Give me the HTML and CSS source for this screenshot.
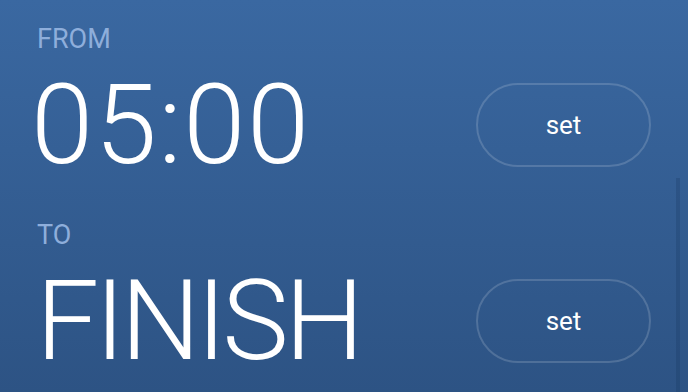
FILE: index.html
```html
<!DOCTYPE html>
<html lang="en">
<head>
    <meta charset="UTF-8">
    <meta name="viewport" content="width=device-width, initial-scale=1.0">
    <title>Timer range</title>
    <link rel="stylesheet" href="styles.css">
</head>
<body>
    <div class="range">
        <div class="field">
            <div class="label">FROM</div>
            <div class="line">
                <div class="value">05:00</div>
                <button class="set-btn">set</button>
            </div>
        </div>
        <div class="field">
            <div class="label">TO</div>
            <div class="line">
                <div class="value value-word">FINISH</div>
                <button class="set-btn">set</button>
            </div>
        </div>
    </div>
    <div class="scroll-track"></div>
</body>
</html>
```

FILE: styles.css
```css
html, body {
    height: 100%;
}
body {
    margin: 0;
    font-family: Roboto, "Liberation Sans", Arial, sans-serif;
    background: linear-gradient(#3a68a1, #2d5384);
    color: #fff;
    overflow: hidden;
}
.range {
    padding: 22px 37px 0 37px;
}
.field {
    height: 196px;
}
.field:last-child {
    height: auto;
}
.label {
    font-size: 27px;
    line-height: 34px;
    color: #8eaedb;
}
.line {
    display: flex;
    justify-content: space-between;
    align-items: center;
    margin-top: 13px;
}
.value {
    font-size: 112px;
    font-weight: 300;
    line-height: 112px;
    margin-left: -6px;
    letter-spacing: 1.5px;
}
.value-word {
    margin-left: -1px;
    letter-spacing: -4px;
}
.set-btn {
    width: 175px;
    height: 84px;
    border: 2px solid rgba(255, 255, 255, 0.16);
    border-radius: 42px;
    background: transparent;
    color: #fff;
    font-family: Roboto, "Liberation Sans", Arial, sans-serif;
    font-size: 26px;
    cursor: pointer;
}
.scroll-track {
    position: fixed;
    top: 178px;
    right: 8px;
    width: 4px;
    bottom: 0;
    background: rgba(20, 50, 90, 0.25);
}
```
